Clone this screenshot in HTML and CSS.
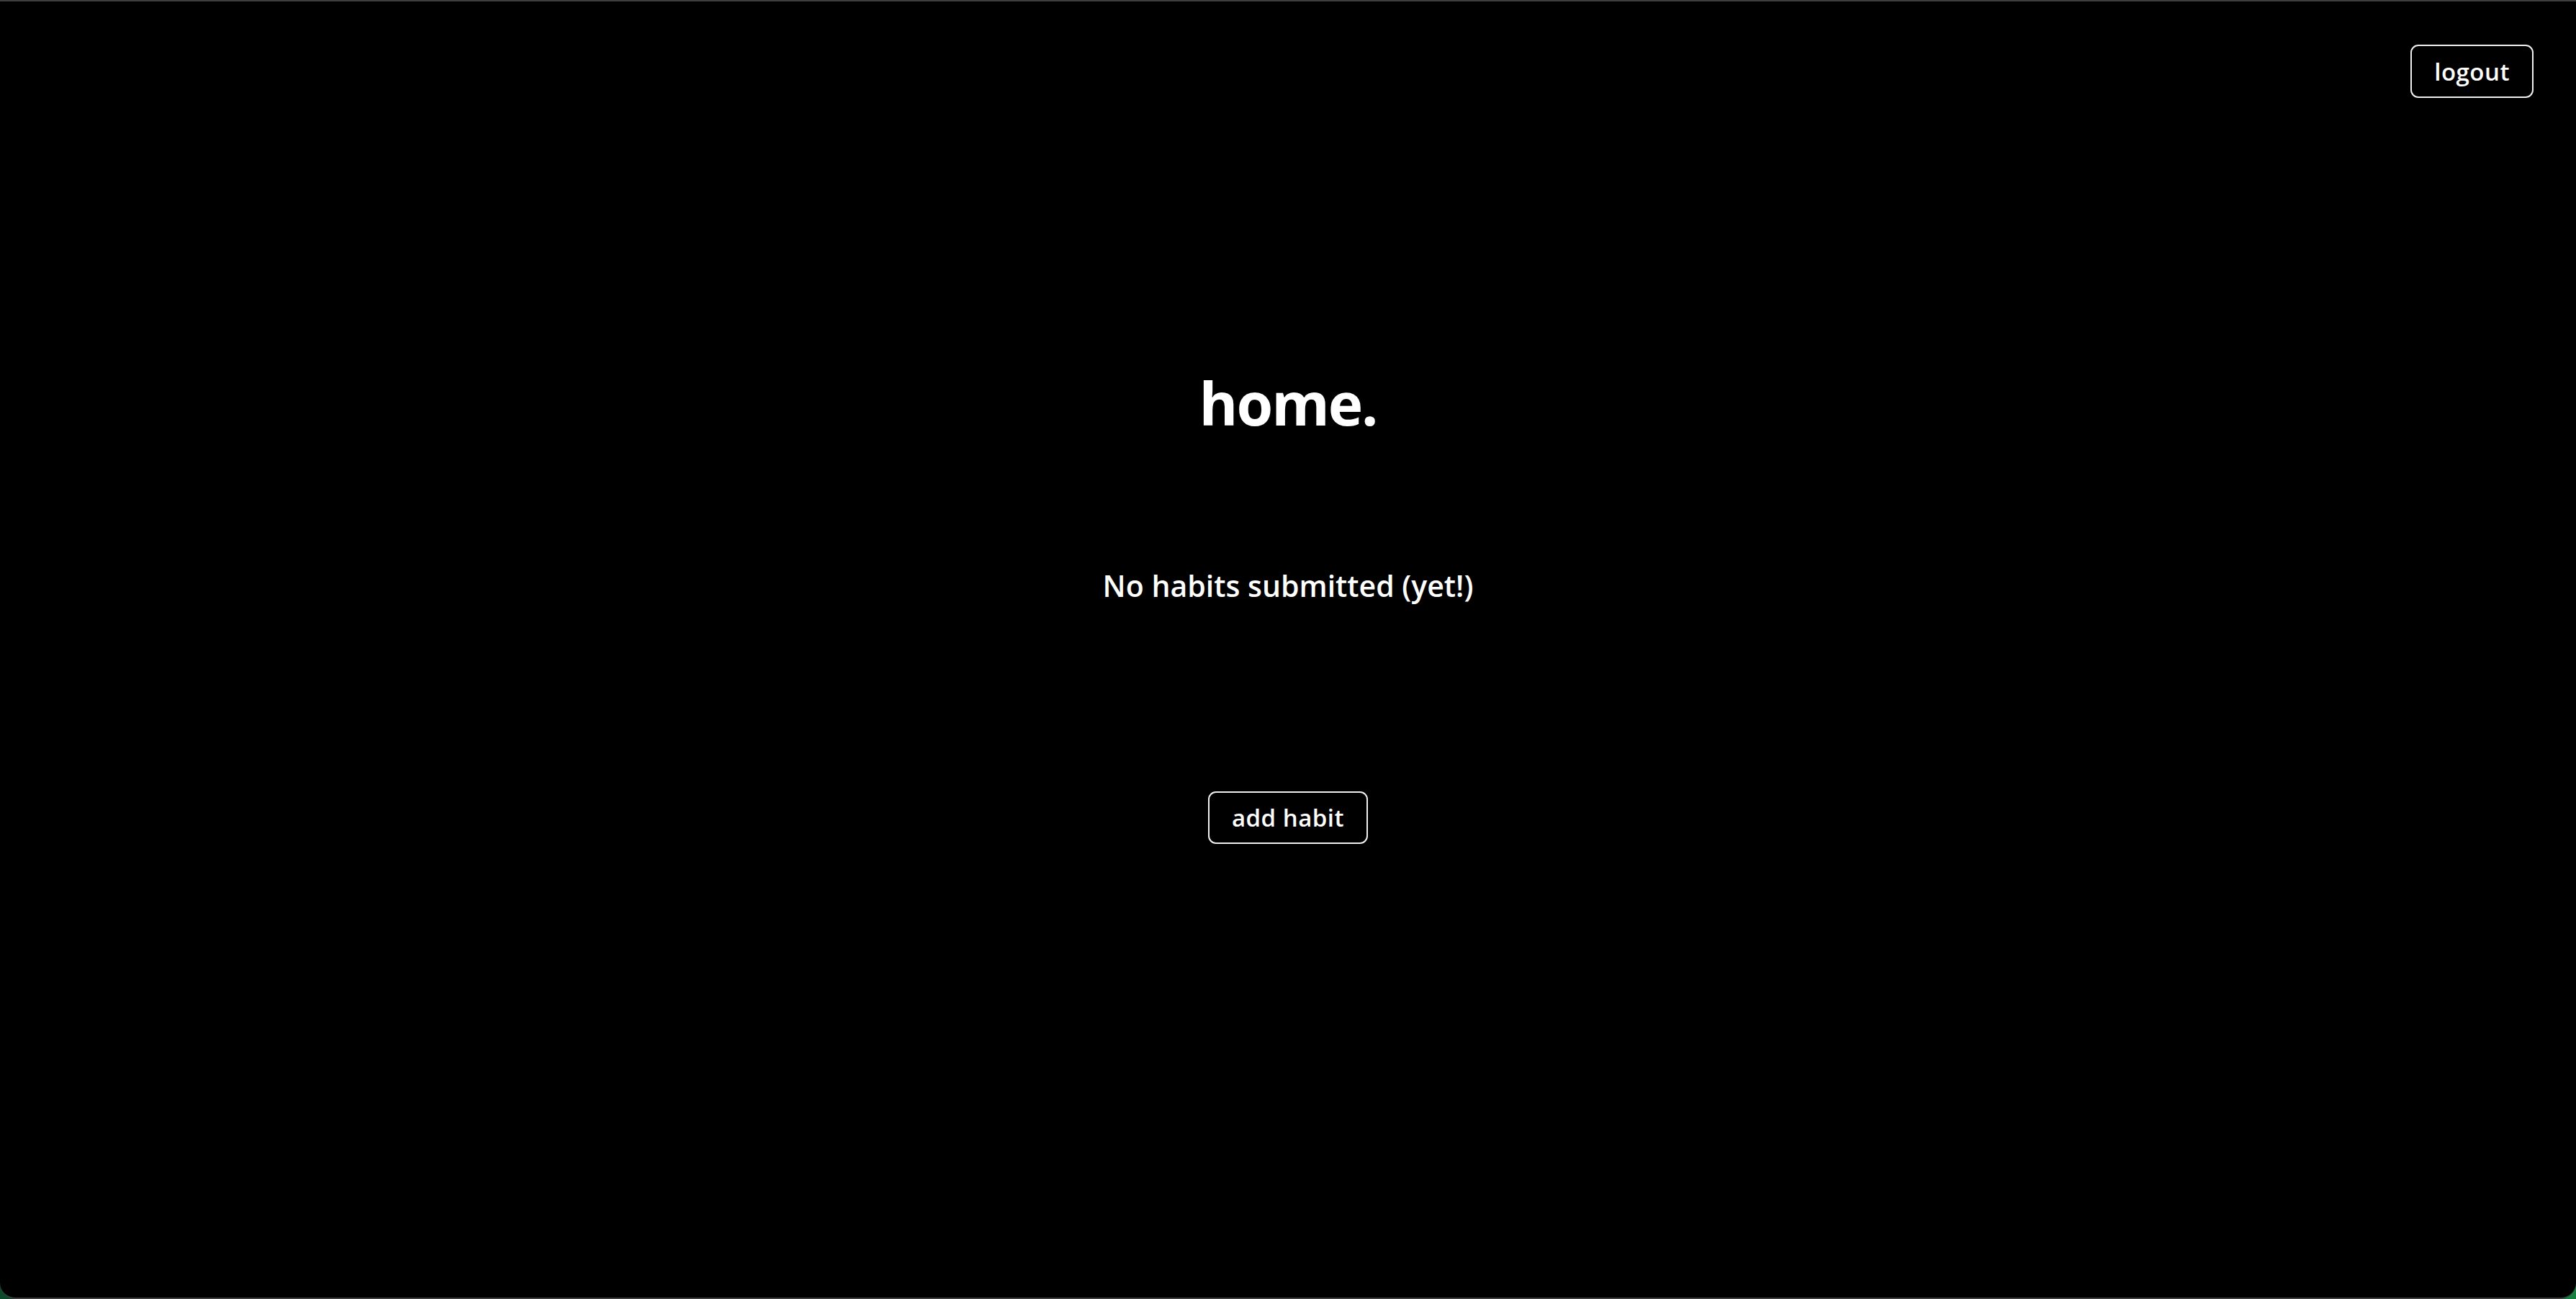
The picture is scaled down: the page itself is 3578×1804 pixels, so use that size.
FILE: index.html
```html
<!DOCTYPE html>
<html lang="en">
<head>
<meta charset="utf-8">
<title>home.</title>
<link rel="stylesheet" href="styles.css">
</head>
<body>
<div class="window">
  <header class="topbar">
    <button class="btn btn-logout" type="button">logout</button>
  </header>
  <main class="home">
    <h1 class="title">home.</h1>
    <p class="empty">No habits submitted (yet!)</p>
    <button class="btn btn-add" type="button">add habit</button>
  </main>
</div>
</body>
</html>
```
FILE: styles.css
```css
html {
  background: linear-gradient(90deg, #0c4a2b 0%, #15803f 100%);
}
* { box-sizing: border-box; }
body {
  margin: 0;
  width: 3578px;
  height: 1804px;
  font-family: "Open Sans", "Noto Sans", sans-serif;
  color: #fff;
}
.window {
  height: 1804px;
  background: #000;
  border-top: 2px solid #3e3e3e;
  border-bottom: 2px solid #3e3e3e;
  border-radius: 0 0 22px 22px;
  display: flex;
  flex-direction: column;
}
.topbar {
  display: flex;
  justify-content: flex-end;
  padding: 60px 59px 0 0;
}
.btn {
  font-family: "Open Sans", "Noto Sans", sans-serif;
  font-size: 33px;
  font-weight: 600;
  letter-spacing: 0.5px;
  color: #fff;
  background: transparent;
  border: 2px solid #f0f0f0;
  border-radius: 11px;
  padding: 0 31px;
  height: 74px;
  line-height: 1;
  cursor: pointer;
}
.home {
  display: flex;
  flex-direction: column;
  align-items: center;
}
.title {
  margin: 373px 0 0;
  font-size: 82px;
  font-weight: 700;
  line-height: 100px;
  letter-spacing: -2px;
}
.empty {
  margin: 179px 0 0;
  font-size: 41px;
  font-weight: 600;
  line-height: 50px;
}
.btn-add {
  margin-top: 261px;
  height: 73px;
}
```
